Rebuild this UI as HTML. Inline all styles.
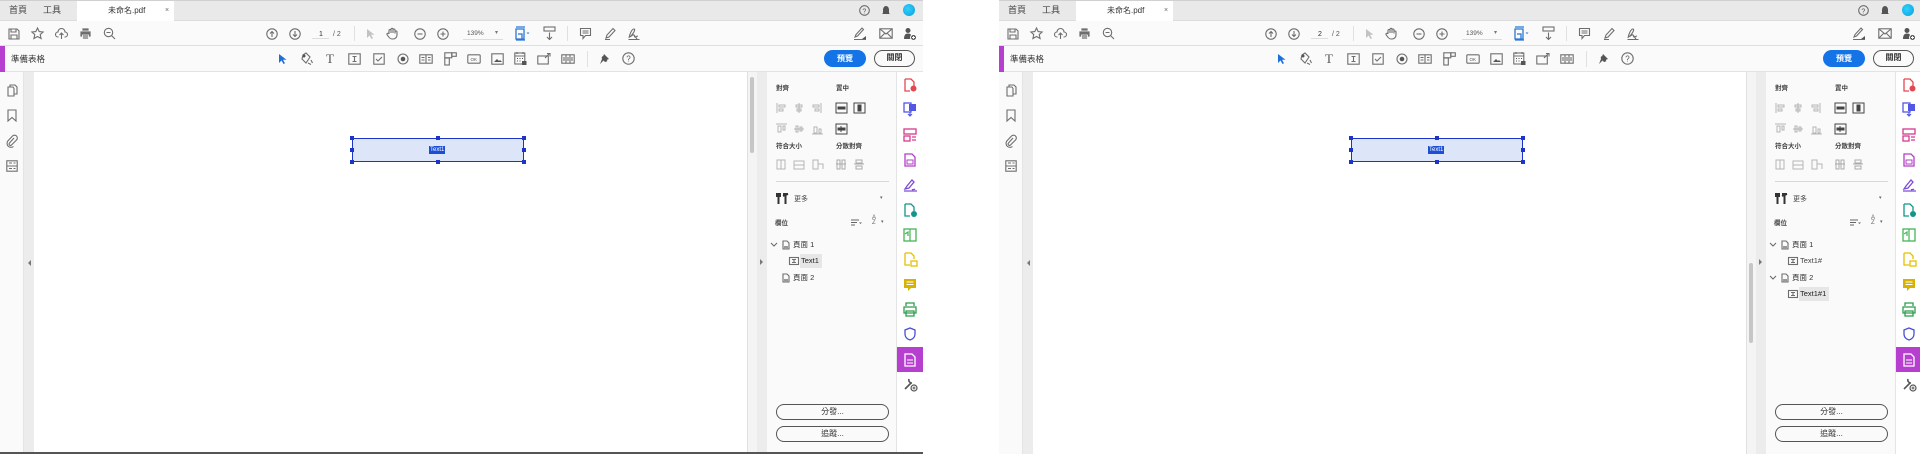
<!DOCTYPE html>
<html><head><meta charset="utf-8">
<style>
*{margin:0;padding:0;box-sizing:border-box}
body{width:1920px;height:454px;background:#fff;position:relative;overflow:hidden;font-family:"Liberation Sans","Noto Sans CJK TC",sans-serif;color:#2c2c2c}
.app{position:absolute;top:0;width:923px;height:454px;overflow:hidden;background:#fff}
.a{position:absolute}
.tabbar{left:0;top:0;width:923px;height:21px;background:#e9e9e9;border-top:1px solid #d0d0d0;border-bottom:1px solid #dcdcdc}
.tb{left:0;top:21px;width:923px;height:25px;background:#fafafa;border-bottom:1px solid #dedede}
.fb{left:0;top:46px;width:923px;height:26px;background:#fafafa;border-bottom:1px solid #e3e3e3}
.t{font-size:9px;white-space:nowrap;line-height:1}
svg{position:absolute;overflow:visible}
.ic{fill:none;stroke:#6e6e6e;stroke-width:1.1}
.btnb{border-radius:10px;font-size:8px;text-align:center;line-height:15px}
</style></head><body>

<!-- ================= LEFT APP ================= -->
<div class="app" style="left:0">
  <div class="a tabbar"></div>
  <div class="a" style="left:77px;top:1px;width:97px;height:20px;background:#fff"></div>
  <div class="a t" style="left:9px;top:6px;font-size:9px;color:#444">首頁</div>
  <div class="a t" style="left:43px;top:6px;font-size:9px;color:#444">工具</div>
  <div class="a t" style="left:108px;top:7px;font-size:8px;color:#333">未命名.pdf</div>
  <div class="a t" style="left:165px;top:7px;font-size:7px;color:#666">×</div>
  <svg style="left:859px;top:5px" width="11" height="11"><circle cx="5.5" cy="5.5" r="4.8" class="ic" stroke="#555"/><text x="3.4" y="8.3" font-size="7" fill="#555" font-family="Liberation Sans">?</text></svg>
  <svg style="left:881px;top:5px" width="10" height="11"><path d="M5 1C3 1 2 3 2 5v3L1 9h8L8 8V5C8 3 7 1 5 1zM4 10h2" fill="#555"/></svg>
  <div class="a" style="left:903px;top:4px;width:12px;height:12px;border-radius:50%;background:radial-gradient(circle at 40% 40%,#2fd0ff,#0a9fd8)"></div>

  <div class="a tb"></div>
  <!-- left tools -->
  <svg style="left:8px;top:28px" width="12" height="12"><path d="M1 1h8l2 2v8H1z M3 1v3h5V1 M3 11V7h6v4" class="ic"/></svg>
  <svg style="left:31px;top:27px" width="13" height="13"><path d="M6.5 1l1.7 3.6 3.9.4-2.9 2.6.9 3.9-3.6-2-3.6 2 .9-3.9L.9 5l3.9-.4z" class="ic"/></svg>
  <svg style="left:55px;top:27px" width="13" height="13"><path d="M3.5 10H3a2.5 2.5 0 0 1 0-5 3.5 3.5 0 0 1 7 0 2.5 2.5 0 0 1 0 5h-.5M6.5 12V6M4.5 8l2-2 2 2" class="ic"/></svg>
  <svg style="left:79px;top:27px" width="13" height="13"><path d="M3 4V1h7v3M1 4h11v6H1zM3.5 8h6v4h-6z" fill="#6e6e6e" stroke="#fafafa" stroke-width=".8"/></svg>
  <svg style="left:103px;top:27px" width="13" height="13"><circle cx="5.5" cy="5.5" r="4.2" class="ic"/><path d="M8.5 8.5L12 12M3.5 5.5h4" class="ic"/></svg>
  <!-- center tools -->
  <svg style="left:266px;top:28px" width="12" height="12"><circle cx="6" cy="6" r="5.2" class="ic" stroke="#c4c4c4"/><path d="M6 9V3.5M4 5.5l2-2 2 2" class="ic" stroke="#c4c4c4"/></svg>
  <svg style="left:289px;top:28px" width="12" height="12"><circle cx="6" cy="6" r="5.2" class="ic" stroke="#555"/><path d="M6 3v5.5M4 6.5l2 2 2-2" class="ic" stroke="#555"/></svg>
  <div class="a" style="left:312px;top:30px;width:17px;height:9px;border-bottom:1px solid #ddd"></div>
  <div class="a t" style="left:319px;top:31px;font-size:7px">1</div>
  <div class="a t" style="left:333px;top:31px;font-size:7px;color:#555">/ 2</div>
  <div class="a" style="left:354px;top:26px;width:1px;height:15px;background:#e0e0e0"></div>
  <svg style="left:366px;top:28px" width="10" height="12"><path d="M1 1v9l2.5-2.5 2 3.5 1.5-.8-2-3.4H8.5z" fill="#c2c2c2"/></svg>
  <svg style="left:386px;top:27px" width="12" height="13"><path d="M3 7V3.5a1 1 0 0 1 2 0V6M5 6V2.3a1 1 0 0 1 2 0V6M7 6V3a1 1 0 0 1 2 0v3.5M9 5a1 1 0 0 1 2 0v3c0 2.5-2 4-4 4H6c-2 0-3-1.5-4-3L1 7.5a1 1 0 0 1 2-.5" class="ic" stroke="#bbb"/></svg>
  <svg style="left:414px;top:28px" width="12" height="12"><circle cx="6" cy="6" r="5.2" class="ic" stroke="#555"/><path d="M3.5 6h5" class="ic" stroke="#555"/></svg>
  <svg style="left:437px;top:28px" width="12" height="12"><circle cx="6" cy="6" r="5.2" class="ic" stroke="#555"/><path d="M3.5 6h5M6 3.5v5" class="ic" stroke="#555"/></svg>
  <div class="a" style="left:463px;top:30px;width:40px;height:10px;border-bottom:1px solid #ddd"></div>
  <div class="a t" style="left:467px;top:31px;font-size:6.5px;color:#555">139%</div>
  <div class="a t" style="left:495px;top:30px;font-size:6px;color:#777">▾</div>
  <svg style="left:515px;top:26px" width="15" height="15"><path d="M1 1h9M1 14h9M1 3h8v10H1zM3 8h4v5" fill="none" stroke="#2b78d4" stroke-width="1.3"/><path d="M11.5 6.5h3l-1.5 1.6z" fill="#2b78d4"/></svg>
  <svg style="left:543px;top:26px" width="13" height="15"><rect x="1" y="1" width="11" height="4" class="ic" stroke="#555"/><path d="M6.5 6.5v7M4 11l2.5 2.5L9 11" class="ic" stroke="#555"/></svg>
  <div class="a" style="left:567px;top:26px;width:1px;height:15px;background:#e0e0e0"></div>
  <svg style="left:579px;top:27px" width="13" height="13"><path d="M1.5 1.5h10v7h-5l-2.5 3v-3h-2.5zM3.5 4h6M3.5 6h6" class="ic" stroke="#555"/></svg>
  <svg style="left:604px;top:27px" width="13" height="13"><path d="M2 11l1-3 6-6.5 2 2L5 10zM1 12.5h5" class="ic" stroke="#555"/></svg>
  <svg style="left:627px;top:27px" width="13" height="13"><path d="M2 11c1-5 3-9 5-9s-1 5-3 7 2-2 3-1 0 2 1 2 2-1 3-1M7 8l3 4M1.5 12.5h11" class="ic" stroke="#555"/></svg>
  <!-- right tools -->
  <svg style="left:853px;top:27px" width="14" height="13"><path d="M2 10l2.5-1 6-6.5-1.5-1.5L3 7.5z M1 12.5h12" class="ic" stroke="#555"/><path d="M9 12h4V9z" fill="#555"/></svg>
  <svg style="left:879px;top:28px" width="14" height="11"><rect x=".8" y=".8" width="12.4" height="9.4" class="ic" stroke="#555"/><path d="M1 1l6 5 6-5M1 10l4.5-4.5M13 10L8.5 5.5" class="ic" stroke="#555"/></svg>
  <svg style="left:903px;top:27px" width="14" height="14"><circle cx="5" cy="3.5" r="2.5" fill="#555"/><path d="M1 12c0-4 1.5-5.5 4-5.5s4 1.5 4 5.5z" fill="#555"/><circle cx="10.5" cy="10.5" r="3" fill="#555" stroke="#fafafa"/><path d="M9 10.5h3M10.5 9v3" stroke="#fff" stroke-width=".9"/></svg>

  <!-- form bar -->
  <div class="a fb"></div>
  <div class="a" style="left:0;top:46px;width:5px;height:26px;background:#b63fd0"></div>
  <div class="a t" style="left:11px;top:55px;font-size:8.5px;color:#333">準備表格</div>
  <svg style="left:278px;top:53px" width="9" height="12"><path d="M1 1v9l2.5-2.5 2 3.5 1.5-.8-2-3.4H8.5z" fill="#1e6fd6"/></svg>
  <svg style="left:300px;top:52px" width="14" height="14"><path d="M3 3l3-2 4 4-4 6-4-4zM8 11l3 1.5M11 8l1.5 3" class="ic" stroke="#555"/><circle cx="4" cy="4" r="1.5" fill="#555"/></svg>
  <div class="a t" style="left:326px;top:52px;font-size:13px;font-family:'Liberation Serif',serif;color:#555">T</div>
  <svg style="left:348px;top:53px" width="13" height="12"><rect x=".8" y=".8" width="11.4" height="10.4" class="ic" stroke="#555"/><path d="M4.5 3.5h4M6.5 3.5v5M4.5 8.5h4" class="ic" stroke="#555"/></svg>
  <svg style="left:373px;top:53px" width="12" height="12"><rect x=".8" y=".8" width="10.4" height="10.4" class="ic" stroke="#555"/><path d="M3 6l2 2 4-4" class="ic" stroke="#555"/></svg>
  <svg style="left:397px;top:53px" width="12" height="12"><circle cx="6" cy="6" r="5" class="ic" stroke="#555"/><circle cx="6" cy="6" r="2.3" fill="#555"/></svg>
  <svg style="left:419px;top:54px" width="14" height="10"><rect x=".8" y=".8" width="12.4" height="8.4" class="ic" stroke="#555"/><path d="M7 1v8M2.5 3.5h3M2.5 6h3M9 3.5h2.5M9 6h2.5" class="ic" stroke="#555"/></svg>
  <svg style="left:444px;top:52px" width="13" height="14"><rect x=".8" y=".8" width="7" height="5" class="ic" stroke="#555"/><rect x="7.8" y=".8" width="4.5" height="3.5" class="ic" stroke="#555"/><rect x=".8" y="6" width="4.5" height="7" class="ic" stroke="#555"/></svg>
  <svg style="left:467px;top:54px" width="14" height="10"><rect x=".8" y=".8" width="12.4" height="8.4" rx="1" class="ic" stroke="#555"/><text x="3.5" y="7" font-size="4.5" fill="#555" font-family="Liberation Sans">OK</text></svg>
  <svg style="left:491px;top:53px" width="13" height="12"><rect x=".8" y=".8" width="11.4" height="10.4" class="ic" stroke="#555"/><path d="M3 9l3-3 2 2 1-1 2 2z" fill="#555"/></svg>
  <svg style="left:514px;top:51px" width="13" height="15"><rect x=".8" y="2" width="10" height="11" class="ic" stroke="#555"/><path d="M3 1v2M9 1v2M1 5h10" class="ic" stroke="#555"/><path d="M3 7h1v1H3zM5.5 7h1v1h-1zM8 7h1v1H8zM3 9.5h1v1H3zM5.5 9.5h1v1h-1z" fill="#555"/><rect x="8" y="10" width="4.5" height="4" fill="#555"/></svg>
  <svg style="left:537px;top:52px" width="15" height="13"><rect x=".8" y="4" width="10.5" height="8" class="ic" stroke="#555"/><path d="M8 6l4-4M10 1.5h3v3" class="ic" stroke="#555"/></svg>
  <svg style="left:561px;top:54px" width="14" height="10"><rect x=".8" y=".8" width="12.4" height="8.4" class="ic" stroke="#555"/><path d="M5 1v8M9 1v8M3 3v4M7 3v4M11 3v4" class="ic" stroke="#555"/></svg>
  <div class="a" style="left:587px;top:51px;width:1px;height:16px;background:#e0e0e0"></div>
  <svg style="left:598px;top:52px" width="13" height="13"><path d="M6 2l5 5-1.5.5L7 10 5.5 8.5 2 12M3.5 6l1-2 5 5-2 1" fill="#555"/></svg>
  <svg style="left:622px;top:52px" width="13" height="13"><circle cx="6.5" cy="6.5" r="5.7" class="ic" stroke="#555"/><text x="4.2" y="9.3" font-size="8" fill="#555" font-family="Liberation Sans">?</text></svg>
  <div class="a btnb" style="left:824px;top:50px;width:42px;height:17px;background:#1473e6;color:#fff;font-weight:bold;line-height:17px;border-radius:9px">預覽</div>
  <div class="a btnb" style="left:874px;top:50px;width:41px;height:17px;border:1.5px solid #555;color:#333;font-weight:bold;line-height:14px;border-radius:9px">關閉</div>

  <!-- content -->
  <div class="a" style="left:0;top:72px;width:24px;height:382px;background:#fafafa;border-right:1px solid #e4e4e4"></div>
  <div class="a" style="left:24px;top:72px;width:10px;height:382px;background:#ececec"></div>
  <svg style="left:7px;top:84px" width="11" height="13"><path d="M3 3V1h5l2 2v7H7M1 3h5l1 1.5V12H1z" class="ic" stroke="#555"/></svg>
  <svg style="left:7px;top:109px" width="10" height="13"><path d="M1 1h8v11L5 8.5 1 12z" class="ic" stroke="#555"/></svg>
  <svg style="left:6px;top:134px" width="12" height="13"><path d="M8 4L3.5 9a1.4 1.4 0 0 0 2 2L10.5 6a2.8 2.8 0 0 0-4-4L1.8 7A4 4 0 0 0 7.5 12.5" class="ic" stroke="#555"/></svg>
  <svg style="left:6px;top:160px" width="12" height="12"><rect x=".8" y=".8" width="10.4" height="10.4" class="ic" stroke="#555"/><path d="M1 6h10M3 3h3M3 8.5h3M7.5 3h2M7.5 8.5h2" class="ic" stroke="#555"/></svg>
  <div class="a" style="left:28px;top:260px;width:0;height:0;border:3px solid transparent;border-right:3px solid #777;border-left:0"></div>

  <!-- text field -->
  <div class="a" style="left:352px;top:138px;width:172px;height:24px;background:#dde5f9;border:1.5px solid #1d34c9"></div>
  <div class="a" style="left:350px;top:136px;width:4px;height:4px;background:#1d34c9"></div>
  <div class="a" style="left:436px;top:136px;width:4px;height:4px;background:#1d34c9"></div>
  <div class="a" style="left:522px;top:136px;width:4px;height:4px;background:#1d34c9"></div>
  <div class="a" style="left:350px;top:148px;width:4px;height:4px;background:#1d34c9"></div>
  <div class="a" style="left:522px;top:148px;width:4px;height:4px;background:#1d34c9"></div>
  <div class="a" style="left:350px;top:160px;width:4px;height:4px;background:#1d34c9"></div>
  <div class="a" style="left:436px;top:160px;width:4px;height:4px;background:#1d34c9"></div>
  <div class="a" style="left:522px;top:160px;width:4px;height:4px;background:#1d34c9"></div>
  <div class="a t" style="left:429px;top:146px;font-size:6px;background:#1d4fd6;color:#fff;padding:1px 1px">Text1</div>

  <!-- scrollbar -->
  <div class="a" style="left:747px;top:72px;width:10px;height:382px;background:#f4f4f4;border-left:1px solid #e0e0e0"></div>
  <div class="a" style="left:750px;top:77px;width:4px;height:76px;background:#c6c6c6;border-radius:2px"></div>
  <div class="a" style="left:757px;top:72px;width:10px;height:382px;background:#ececec"></div>
  <div class="a" style="left:760px;top:259px;width:0;height:0;border:3px solid transparent;border-left:3px solid #777;border-right:0"></div>

  <!-- right panel -->
  <div class="a" style="left:767px;top:72px;width:130px;height:382px;background:#fafafa;border-right:1px solid #e4e4e4"></div>
  <div class="a t" style="left:776px;top:86px;font-size:6.5px;font-weight:bold;color:#444">對齊</div>
  <div class="a t" style="left:836px;top:86px;font-size:6.5px;font-weight:bold;color:#444">置中</div>
  <svg style="left:776px;top:102px" width="120" height="70" stroke="#b5b5b5" fill="none" stroke-width="1">
    <path d="M1 1v10M3 3h6v2H3zM3 7h4v2H3z"/>
    <path d="M23 1v10M20 3h6v2h-6zM21 7h4v2h-4z"/>
    <path d="M45 1v10M37 3h6v2h-6zM39 7h4v2h-4z"/>
    <g stroke="#444"><rect x="60" y="1" width="11" height="10"/><path d="M62 5h7v2h-7z" fill="#444"/><rect x="78" y="1" width="11" height="10"/><path d="M82 3h3v6h-3z" fill="#444"/></g>
    <path d="M0 22h11M2 24h3v6H2zM7 24h2v4H7z"/>
    <path d="M18 27h10M20 24h2v6h-2zM24 25h2v4h-2z"/>
    <path d="M36 32h11M38 25h3v6h-3zM43 27h2v4h-2z"/>
    <g stroke="#444"><rect x="60" y="22" width="11" height="10"/><path d="M65 24v6M62 26h7v2h-7z" fill="#444"/></g>
    <path d="M1 58h8v9H1zM5 58v9M3 60h0"/>
    <path d="M18 59h10v8H18zM18 63h10"/>
    <path d="M37 58h5v9h-5zM42 62h5v5"/>
    <path d="M60 62h10M61 58h3v9h-3zM66 58h3v9h-3z" stroke="#aaa"/>
    <path d="M78 62h10M80 58h6v3h-6zM80 64h6v3h-6z" stroke="#aaa"/>
  </svg>
  <div class="a t" style="left:776px;top:144px;font-size:6.5px;font-weight:bold;color:#444">符合大小</div>
  <div class="a t" style="left:836px;top:144px;font-size:6.5px;font-weight:bold;color:#444">分散對齊</div>
  <div class="a" style="left:776px;top:181px;width:113px;height:1px;background:#d8d8d8"></div>
  <svg style="left:775px;top:192px" width="14" height="13"><path d="M1 2h5M3.5 2v10M8 2h5M10.5 2v10M1 4h5M8 4l5-2" stroke="#333" stroke-width="2"/></svg>
  <div class="a t" style="left:794px;top:196px;font-size:7px;color:#444">更多</div>
  <div class="a t" style="left:880px;top:196px;font-size:5px;color:#666">▾</div>
  <div class="a t" style="left:775px;top:221px;font-size:6.5px;font-weight:bold;color:#444">欄位</div>
  <svg style="left:850px;top:219px" width="12" height="8"><path d="M1 1h8M1 3.5h6M1 6h4" stroke="#666"/><path d="M9 3.5h3l-1.5 1.5z" fill="#666"/></svg>
  <div class="a t" style="left:872px;top:216px;font-size:6px;color:#666;line-height:.8">A<br>Z</div>
  <div class="a t" style="left:881px;top:220px;font-size:5px;color:#666">▾</div>
  <!-- tree -->
  <svg style="left:770px;top:242px" width="8" height="6"><path d="M1 1l3 3 3-3" stroke="#666" fill="none"/></svg>
  <svg style="left:782px;top:240px" width="8" height="10"><path d="M1 1h4l2 2v6H1z" class="ic" stroke="#777"/><path d="M2 6h4v3H2z" fill="#999"/></svg>
  <div class="a t" style="left:793px;top:241px;font-size:7.5px;color:#333">頁面 1</div>
  <div class="a" style="left:800px;top:254px;width:22px;height:14px;background:#e6e6e6"></div>
  <svg style="left:789px;top:257px" width="10" height="8"><rect x=".5" y=".5" width="9" height="7" class="ic" stroke="#777" stroke-width=".9"/><path d="M3 2.5h4M5 2.5v3M3 5.5h4" class="ic" stroke="#777" stroke-width=".8"/></svg>
  <div class="a t" style="left:801px;top:257px;font-size:7.5px;color:#222">Text1</div>
  <svg style="left:782px;top:273px" width="8" height="10"><path d="M1 1h4l2 2v6H1z" class="ic" stroke="#777"/><path d="M2 6h4v3H2z" fill="#999"/></svg>
  <div class="a t" style="left:793px;top:274px;font-size:7.5px;color:#333">頁面 2</div>
  <div class="a btnb" style="left:776px;top:404px;width:113px;height:16px;border:1px solid #555;line-height:14px;color:#333">分發...</div>
  <div class="a btnb" style="left:776px;top:426px;width:113px;height:16px;border:1px solid #555;line-height:14px;color:#333">追蹤...</div>

  <!-- right icon column -->
  <div class="a" style="left:897px;top:72px;width:26px;height:382px;background:#fff"></div>
  <svg style="left:903px;top:78px" width="14" height="14"><path d="M2 1h6l3 3v4M2 1v12h5" fill="none" stroke="#e34850" stroke-width="1.3"/><circle cx="10.5" cy="10.5" r="3" fill="#e34850"/></svg>
  <svg style="left:903px;top:102px" width="14" height="15"><rect x="1" y="1" width="7" height="9" fill="#fff" stroke="#5258e4" stroke-width="1.3"/><rect x="6" y="2" width="7" height="7" fill="#5258e4"/><path d="M7 10v4M5 12l2 2 2-2" stroke="#5258e4" fill="none" stroke-width="1.2"/></svg>
  <svg style="left:903px;top:128px" width="14" height="14"><rect x="1" y="1" width="12" height="5" fill="none" stroke="#d83790" stroke-width="1.3"/><rect x="1" y="8" width="6" height="5" fill="none" stroke="#d83790" stroke-width="1.3"/><path d="M9 9h4M9 12h4" stroke="#d83790" stroke-width="1.3"/></svg>
  <svg style="left:904px;top:153px" width="12" height="14"><path d="M1 1h7l3 3v9H1z" fill="none" stroke="#b33ec8" stroke-width="1.3"/><rect x="3" y="7" width="6" height="4" fill="none" stroke="#b33ec8"/></svg>
  <svg style="left:903px;top:178px" width="15" height="14"><path d="M2 11l2-3 5-6 2 2-5 6zM1 13h13M9 12c1-1 2 0 3-1" fill="none" stroke="#7e4cd8" stroke-width="1.3"/></svg>
  <svg style="left:903px;top:203px" width="15" height="14"><path d="M2 1h6l3 3v4M2 1v12h5" fill="none" stroke="#12968a" stroke-width="1.3"/><circle cx="11" cy="11" r="3" fill="#12968a"/></svg>
  <svg style="left:903px;top:228px" width="14" height="14"><rect x="1" y="1" width="12" height="12" fill="none" stroke="#44b556" stroke-width="1.3"/><path d="M7 1v12M2 6l3-2v4" fill="none" stroke="#44b556" stroke-width="1.2"/></svg>
  <svg style="left:903px;top:252px" width="15" height="15"><path d="M2 1h6l3 3v3M2 1v12h5" fill="none" stroke="#e3c100" stroke-width="1.3"/><rect x="8" y="9" width="6" height="5" fill="none" stroke="#e3c100" stroke-width="1.3"/></svg>
  <svg style="left:903px;top:278px" width="14" height="14"><path d="M1 1h12v9H8l-3 3v-3H1z" fill="#d8b200"/><path d="M3.5 4h7M3.5 6.5h7" stroke="#fff"/></svg>
  <svg style="left:903px;top:302px" width="14" height="15"><path d="M3 4V1h8v3M1 5h12v6H1zM3 9h8v5H3z" fill="none" stroke="#2d9d4e" stroke-width="1.3"/></svg>
  <svg style="left:904px;top:327px" width="12" height="14"><path d="M6 1l5 2v4c0 3-2 5-5 6-3-1-5-3-5-6V3z" fill="none" stroke="#4b4fd4" stroke-width="1.3"/></svg>
  <div class="a" style="left:897px;top:347px;width:26px;height:25px;background:#b63fd0"></div>
  <svg style="left:904px;top:353px" width="12" height="14"><path d="M1 1h7l3 3v9H1z" fill="none" stroke="#fff" stroke-width="1.3"/><path d="M3 7h6M3 10h6" stroke="#fff"/></svg>
  <svg style="left:903px;top:377px" width="15" height="15"><path d="M2 12l6-6M6 2a3 3 0 0 0 3 4" fill="none" stroke="#555" stroke-width="1.6"/><circle cx="11" cy="11" r="3" fill="none" stroke="#555" stroke-width="1.2"/><path d="M9.5 11h3M11 9.5v3" stroke="#555"/></svg>
  <div class="a" style="left:0;top:452px;width:923px;height:2px;background:#555"></div>
</div>

<!-- ================= RIGHT APP ================= -->
<div class="app" style="left:999px">
  <div class="a tabbar"></div>
  <div class="a" style="left:77px;top:1px;width:97px;height:20px;background:#fff"></div>
  <div class="a t" style="left:9px;top:6px;font-size:9px;color:#444">首頁</div>
  <div class="a t" style="left:43px;top:6px;font-size:9px;color:#444">工具</div>
  <div class="a t" style="left:108px;top:7px;font-size:8px;color:#333">未命名.pdf</div>
  <div class="a t" style="left:165px;top:7px;font-size:7px;color:#666">×</div>
  <svg style="left:859px;top:5px" width="11" height="11"><circle cx="5.5" cy="5.5" r="4.8" class="ic" stroke="#555"/><text x="3.4" y="8.3" font-size="7" fill="#555" font-family="Liberation Sans">?</text></svg>
  <svg style="left:881px;top:5px" width="10" height="11"><path d="M5 1C3 1 2 3 2 5v3L1 9h8L8 8V5C8 3 7 1 5 1zM4 10h2" fill="#555"/></svg>
  <div class="a" style="left:903px;top:4px;width:12px;height:12px;border-radius:50%;background:radial-gradient(circle at 40% 40%,#2fd0ff,#0a9fd8)"></div>

  <div class="a tb"></div>
  <svg style="left:8px;top:28px" width="12" height="12"><path d="M1 1h8l2 2v8H1z M3 1v3h5V1 M3 11V7h6v4" class="ic"/></svg>
  <svg style="left:31px;top:27px" width="13" height="13"><path d="M6.5 1l1.7 3.6 3.9.4-2.9 2.6.9 3.9-3.6-2-3.6 2 .9-3.9L.9 5l3.9-.4z" class="ic"/></svg>
  <svg style="left:55px;top:27px" width="13" height="13"><path d="M3.5 10H3a2.5 2.5 0 0 1 0-5 3.5 3.5 0 0 1 7 0 2.5 2.5 0 0 1 0 5h-.5M6.5 12V6M4.5 8l2-2 2 2" class="ic"/></svg>
  <svg style="left:79px;top:27px" width="13" height="13"><path d="M3 4V1h7v3M1 4h11v6H1zM3.5 8h6v4h-6z" fill="#6e6e6e" stroke="#fafafa" stroke-width=".8"/></svg>
  <svg style="left:103px;top:27px" width="13" height="13"><circle cx="5.5" cy="5.5" r="4.2" class="ic"/><path d="M8.5 8.5L12 12M3.5 5.5h4" class="ic"/></svg>
  <svg style="left:266px;top:28px" width="12" height="12"><circle cx="6" cy="6" r="5.2" class="ic" stroke="#555"/><path d="M6 9V3.5M4 5.5l2-2 2 2" class="ic" stroke="#555"/></svg>
  <svg style="left:289px;top:28px" width="12" height="12"><circle cx="6" cy="6" r="5.2" class="ic" stroke="#c4c4c4"/><path d="M6 3v5.5M4 6.5l2 2 2-2" class="ic" stroke="#c4c4c4"/></svg>
  <div class="a" style="left:312px;top:30px;width:17px;height:9px;border-bottom:1px solid #ddd"></div>
  <div class="a t" style="left:319px;top:31px;font-size:7px">2</div>
  <div class="a t" style="left:333px;top:31px;font-size:7px;color:#555">/ 2</div>
  <div class="a" style="left:354px;top:26px;width:1px;height:15px;background:#e0e0e0"></div>
  <svg style="left:366px;top:28px" width="10" height="12"><path d="M1 1v9l2.5-2.5 2 3.5 1.5-.8-2-3.4H8.5z" fill="#c2c2c2"/></svg>
  <svg style="left:386px;top:27px" width="12" height="13"><path d="M3 7V3.5a1 1 0 0 1 2 0V6M5 6V2.3a1 1 0 0 1 2 0V6M7 6V3a1 1 0 0 1 2 0v3.5M9 5a1 1 0 0 1 2 0v3c0 2.5-2 4-4 4H6c-2 0-3-1.5-4-3L1 7.5a1 1 0 0 1 2-.5" class="ic" stroke="#bbb"/></svg>
  <svg style="left:414px;top:28px" width="12" height="12"><circle cx="6" cy="6" r="5.2" class="ic" stroke="#555"/><path d="M3.5 6h5" class="ic" stroke="#555"/></svg>
  <svg style="left:437px;top:28px" width="12" height="12"><circle cx="6" cy="6" r="5.2" class="ic" stroke="#555"/><path d="M3.5 6h5M6 3.5v5" class="ic" stroke="#555"/></svg>
  <div class="a" style="left:463px;top:30px;width:40px;height:10px;border-bottom:1px solid #ddd"></div>
  <div class="a t" style="left:467px;top:31px;font-size:6.5px;color:#555">139%</div>
  <div class="a t" style="left:495px;top:30px;font-size:6px;color:#777">▾</div>
  <svg style="left:515px;top:26px" width="15" height="15"><path d="M1 1h9M1 14h9M1 3h8v10H1zM3 8h4v5" fill="none" stroke="#2b78d4" stroke-width="1.3"/><path d="M11.5 6.5h3l-1.5 1.6z" fill="#2b78d4"/></svg>
  <svg style="left:543px;top:26px" width="13" height="15"><rect x="1" y="1" width="11" height="4" class="ic" stroke="#555"/><path d="M6.5 6.5v7M4 11l2.5 2.5L9 11" class="ic" stroke="#555"/></svg>
  <div class="a" style="left:567px;top:26px;width:1px;height:15px;background:#e0e0e0"></div>
  <svg style="left:579px;top:27px" width="13" height="13"><path d="M1.5 1.5h10v7h-5l-2.5 3v-3h-2.5zM3.5 4h6M3.5 6h6" class="ic" stroke="#555"/></svg>
  <svg style="left:604px;top:27px" width="13" height="13"><path d="M2 11l1-3 6-6.5 2 2L5 10zM1 12.5h5" class="ic" stroke="#555"/></svg>
  <svg style="left:627px;top:27px" width="13" height="13"><path d="M2 11c1-5 3-9 5-9s-1 5-3 7 2-2 3-1 0 2 1 2 2-1 3-1M7 8l3 4M1.5 12.5h11" class="ic" stroke="#555"/></svg>
  <svg style="left:853px;top:27px" width="14" height="13"><path d="M2 10l2.5-1 6-6.5-1.5-1.5L3 7.5z M1 12.5h12" class="ic" stroke="#555"/><path d="M9 12h4V9z" fill="#555"/></svg>
  <svg style="left:879px;top:28px" width="14" height="11"><rect x=".8" y=".8" width="12.4" height="9.4" class="ic" stroke="#555"/><path d="M1 1l6 5 6-5M1 10l4.5-4.5M13 10L8.5 5.5" class="ic" stroke="#555"/></svg>
  <svg style="left:903px;top:27px" width="14" height="14"><circle cx="5" cy="3.5" r="2.5" fill="#555"/><path d="M1 12c0-4 1.5-5.5 4-5.5s4 1.5 4 5.5z" fill="#555"/><circle cx="10.5" cy="10.5" r="3" fill="#555" stroke="#fafafa"/><path d="M9 10.5h3M10.5 9v3" stroke="#fff" stroke-width=".9"/></svg>

  <div class="a fb"></div>
  <div class="a" style="left:0;top:46px;width:5px;height:26px;background:#b63fd0"></div>
  <div class="a t" style="left:11px;top:55px;font-size:8.5px;color:#333">準備表格</div>
  <svg style="left:278px;top:53px" width="9" height="12"><path d="M1 1v9l2.5-2.5 2 3.5 1.5-.8-2-3.4H8.5z" fill="#1e6fd6"/></svg>
  <svg style="left:300px;top:52px" width="14" height="14"><path d="M3 3l3-2 4 4-4 6-4-4zM8 11l3 1.5M11 8l1.5 3" class="ic" stroke="#555"/><circle cx="4" cy="4" r="1.5" fill="#555"/></svg>
  <div class="a t" style="left:326px;top:52px;font-size:13px;font-family:'Liberation Serif',serif;color:#555">T</div>
  <svg style="left:348px;top:53px" width="13" height="12"><rect x=".8" y=".8" width="11.4" height="10.4" class="ic" stroke="#555"/><path d="M4.5 3.5h4M6.5 3.5v5M4.5 8.5h4" class="ic" stroke="#555"/></svg>
  <svg style="left:373px;top:53px" width="12" height="12"><rect x=".8" y=".8" width="10.4" height="10.4" class="ic" stroke="#555"/><path d="M3 6l2 2 4-4" class="ic" stroke="#555"/></svg>
  <svg style="left:397px;top:53px" width="12" height="12"><circle cx="6" cy="6" r="5" class="ic" stroke="#555"/><circle cx="6" cy="6" r="2.3" fill="#555"/></svg>
  <svg style="left:419px;top:54px" width="14" height="10"><rect x=".8" y=".8" width="12.4" height="8.4" class="ic" stroke="#555"/><path d="M7 1v8M2.5 3.5h3M2.5 6h3M9 3.5h2.5M9 6h2.5" class="ic" stroke="#555"/></svg>
  <svg style="left:444px;top:52px" width="13" height="14"><rect x=".8" y=".8" width="7" height="5" class="ic" stroke="#555"/><rect x="7.8" y=".8" width="4.5" height="3.5" class="ic" stroke="#555"/><rect x=".8" y="6" width="4.5" height="7" class="ic" stroke="#555"/></svg>
  <svg style="left:467px;top:54px" width="14" height="10"><rect x=".8" y=".8" width="12.4" height="8.4" rx="1" class="ic" stroke="#555"/><text x="3.5" y="7" font-size="4.5" fill="#555" font-family="Liberation Sans">OK</text></svg>
  <svg style="left:491px;top:53px" width="13" height="12"><rect x=".8" y=".8" width="11.4" height="10.4" class="ic" stroke="#555"/><path d="M3 9l3-3 2 2 1-1 2 2z" fill="#555"/></svg>
  <svg style="left:514px;top:51px" width="13" height="15"><rect x=".8" y="2" width="10" height="11" class="ic" stroke="#555"/><path d="M3 1v2M9 1v2M1 5h10" class="ic" stroke="#555"/><path d="M3 7h1v1H3zM5.5 7h1v1h-1zM8 7h1v1H8zM3 9.5h1v1H3zM5.5 9.5h1v1h-1z" fill="#555"/><rect x="8" y="10" width="4.5" height="4" fill="#555"/></svg>
  <svg style="left:537px;top:52px" width="15" height="13"><rect x=".8" y="4" width="10.5" height="8" class="ic" stroke="#555"/><path d="M8 6l4-4M10 1.5h3v3" class="ic" stroke="#555"/></svg>
  <svg style="left:561px;top:54px" width="14" height="10"><rect x=".8" y=".8" width="12.4" height="8.4" class="ic" stroke="#555"/><path d="M5 1v8M9 1v8M3 3v4M7 3v4M11 3v4" class="ic" stroke="#555"/></svg>
  <div class="a" style="left:587px;top:51px;width:1px;height:16px;background:#e0e0e0"></div>
  <svg style="left:598px;top:52px" width="13" height="13"><path d="M6 2l5 5-1.5.5L7 10 5.5 8.5 2 12M3.5 6l1-2 5 5-2 1" fill="#555"/></svg>
  <svg style="left:622px;top:52px" width="13" height="13"><circle cx="6.5" cy="6.5" r="5.7" class="ic" stroke="#555"/><text x="4.2" y="9.3" font-size="8" fill="#555" font-family="Liberation Sans">?</text></svg>
  <div class="a btnb" style="left:824px;top:50px;width:42px;height:17px;background:#1473e6;color:#fff;font-weight:bold;line-height:17px;border-radius:9px">預覽</div>
  <div class="a btnb" style="left:874px;top:50px;width:41px;height:17px;border:1.5px solid #555;color:#333;font-weight:bold;line-height:14px;border-radius:9px">關閉</div>

  <div class="a" style="left:0;top:72px;width:24px;height:382px;background:#fafafa;border-right:1px solid #e4e4e4"></div>
  <div class="a" style="left:24px;top:72px;width:10px;height:382px;background:#ececec"></div>
  <svg style="left:7px;top:84px" width="11" height="13"><path d="M3 3V1h5l2 2v7H7M1 3h5l1 1.5V12H1z" class="ic" stroke="#555"/></svg>
  <svg style="left:7px;top:109px" width="10" height="13"><path d="M1 1h8v11L5 8.5 1 12z" class="ic" stroke="#555"/></svg>
  <svg style="left:6px;top:134px" width="12" height="13"><path d="M8 4L3.5 9a1.4 1.4 0 0 0 2 2L10.5 6a2.8 2.8 0 0 0-4-4L1.8 7A4 4 0 0 0 7.5 12.5" class="ic" stroke="#555"/></svg>
  <svg style="left:6px;top:160px" width="12" height="12"><rect x=".8" y=".8" width="10.4" height="10.4" class="ic" stroke="#555"/><path d="M1 6h10M3 3h3M3 8.5h3M7.5 3h2M7.5 8.5h2" class="ic" stroke="#555"/></svg>
  <div class="a" style="left:28px;top:260px;width:0;height:0;border:3px solid transparent;border-right:3px solid #777;border-left:0"></div>

  <div class="a" style="left:352px;top:138px;width:172px;height:24px;background:#dde5f9;border:1.5px solid #1d34c9"></div>
  <div class="a" style="left:350px;top:136px;width:4px;height:4px;background:#1d34c9"></div>
  <div class="a" style="left:436px;top:136px;width:4px;height:4px;background:#1d34c9"></div>
  <div class="a" style="left:522px;top:136px;width:4px;height:4px;background:#1d34c9"></div>
  <div class="a" style="left:350px;top:148px;width:4px;height:4px;background:#1d34c9"></div>
  <div class="a" style="left:522px;top:148px;width:4px;height:4px;background:#1d34c9"></div>
  <div class="a" style="left:350px;top:160px;width:4px;height:4px;background:#1d34c9"></div>
  <div class="a" style="left:436px;top:160px;width:4px;height:4px;background:#1d34c9"></div>
  <div class="a" style="left:522px;top:160px;width:4px;height:4px;background:#1d34c9"></div>
  <div class="a t" style="left:429px;top:146px;font-size:6px;background:#1d4fd6;color:#fff;padding:1px 1px">Text1</div>

  <div class="a" style="left:747px;top:72px;width:10px;height:382px;background:#f4f4f4;border-left:1px solid #e0e0e0"></div>
  <div class="a" style="left:750px;top:263px;width:4px;height:80px;background:#c6c6c6;border-radius:2px"></div>
  <div class="a" style="left:757px;top:72px;width:10px;height:382px;background:#ececec"></div>
  <div class="a" style="left:760px;top:259px;width:0;height:0;border:3px solid transparent;border-left:3px solid #777;border-right:0"></div>

  <div class="a" style="left:767px;top:72px;width:130px;height:382px;background:#fafafa;border-right:1px solid #e4e4e4"></div>
  <div class="a t" style="left:776px;top:86px;font-size:6.5px;font-weight:bold;color:#444">對齊</div>
  <div class="a t" style="left:836px;top:86px;font-size:6.5px;font-weight:bold;color:#444">置中</div>
  <svg style="left:776px;top:102px" width="120" height="70" stroke="#b5b5b5" fill="none" stroke-width="1">
    <path d="M1 1v10M3 3h6v2H3zM3 7h4v2H3z"/>
    <path d="M23 1v10M20 3h6v2h-6zM21 7h4v2h-4z"/>
    <path d="M45 1v10M37 3h6v2h-6zM39 7h4v2h-4z"/>
    <g stroke="#444"><rect x="60" y="1" width="11" height="10"/><path d="M62 5h7v2h-7z" fill="#444"/><rect x="78" y="1" width="11" height="10"/><path d="M82 3h3v6h-3z" fill="#444"/></g>
    <path d="M0 22h11M2 24h3v6H2zM7 24h2v4H7z"/>
    <path d="M18 27h10M20 24h2v6h-2zM24 25h2v4h-2z"/>
    <path d="M36 32h11M38 25h3v6h-3zM43 27h2v4h-2z"/>
    <g stroke="#444"><rect x="60" y="22" width="11" height="10"/><path d="M65 24v6M62 26h7v2h-7z" fill="#444"/></g>
    <path d="M1 58h8v9H1zM5 58v9"/>
    <path d="M18 59h10v8H18zM18 63h10"/>
    <path d="M37 58h5v9h-5zM42 62h5v5"/>
    <path d="M60 62h10M61 58h3v9h-3zM66 58h3v9h-3z" stroke="#aaa"/>
    <path d="M78 62h10M80 58h6v3h-6zM80 64h6v3h-6z" stroke="#aaa"/>
  </svg>
  <div class="a t" style="left:776px;top:144px;font-size:6.5px;font-weight:bold;color:#444">符合大小</div>
  <div class="a t" style="left:836px;top:144px;font-size:6.5px;font-weight:bold;color:#444">分散對齊</div>
  <div class="a" style="left:776px;top:181px;width:113px;height:1px;background:#d8d8d8"></div>
  <svg style="left:775px;top:192px" width="14" height="13"><path d="M1 2h5M3.5 2v10M8 2h5M10.5 2v10M1 4h5M8 4l5-2" stroke="#333" stroke-width="2"/></svg>
  <div class="a t" style="left:794px;top:196px;font-size:7px;color:#444">更多</div>
  <div class="a t" style="left:880px;top:196px;font-size:5px;color:#666">▾</div>
  <div class="a t" style="left:775px;top:221px;font-size:6.5px;font-weight:bold;color:#444">欄位</div>
  <svg style="left:850px;top:219px" width="12" height="8"><path d="M1 1h8M1 3.5h6M1 6h4" stroke="#666"/><path d="M9 3.5h3l-1.5 1.5z" fill="#666"/></svg>
  <div class="a t" style="left:872px;top:216px;font-size:6px;color:#666;line-height:.8">A<br>Z</div>
  <div class="a t" style="left:881px;top:220px;font-size:5px;color:#666">▾</div>
  <svg style="left:770px;top:242px" width="8" height="6"><path d="M1 1l3 3 3-3" stroke="#666" fill="none"/></svg>
  <svg style="left:782px;top:240px" width="8" height="10"><path d="M1 1h4l2 2v6H1z" class="ic" stroke="#777"/><path d="M2 6h4v3H2z" fill="#999"/></svg>
  <div class="a t" style="left:793px;top:241px;font-size:7.5px;color:#333">頁面 1</div>
  <svg style="left:789px;top:257px" width="10" height="8"><rect x=".5" y=".5" width="9" height="7" class="ic" stroke="#777" stroke-width=".9"/><path d="M3 2.5h4M5 2.5v3M3 5.5h4" class="ic" stroke="#777" stroke-width=".8"/></svg>
  <div class="a t" style="left:801px;top:257px;font-size:7.5px;color:#444">Text1#</div>
  <svg style="left:770px;top:275px" width="8" height="6"><path d="M1 1l3 3 3-3" stroke="#666" fill="none"/></svg>
  <svg style="left:782px;top:273px" width="8" height="10"><path d="M1 1h4l2 2v6H1z" class="ic" stroke="#777"/><path d="M2 6h4v3H2z" fill="#999"/></svg>
  <div class="a t" style="left:793px;top:274px;font-size:7.5px;color:#333">頁面 2</div>
  <div class="a" style="left:800px;top:287px;width:30px;height:14px;background:#e6e6e6"></div>
  <svg style="left:789px;top:290px" width="10" height="8"><rect x=".5" y=".5" width="9" height="7" class="ic" stroke="#777" stroke-width=".9"/><path d="M3 2.5h4M5 2.5v3M3 5.5h4" class="ic" stroke="#777" stroke-width=".8"/></svg>
  <div class="a t" style="left:801px;top:290px;font-size:7.5px;color:#222">Text1#1</div>
  <div class="a btnb" style="left:776px;top:404px;width:113px;height:16px;border:1px solid #555;line-height:14px;color:#333">分發...</div>
  <div class="a btnb" style="left:776px;top:426px;width:113px;height:16px;border:1px solid #555;line-height:14px;color:#333">追蹤...</div>

  <div class="a" style="left:897px;top:72px;width:26px;height:382px;background:#fff"></div>
  <svg style="left:903px;top:78px" width="14" height="14"><path d="M2 1h6l3 3v4M2 1v12h5" fill="none" stroke="#e34850" stroke-width="1.3"/><circle cx="10.5" cy="10.5" r="3" fill="#e34850"/></svg>
  <svg style="left:903px;top:102px" width="14" height="15"><rect x="1" y="1" width="7" height="9" fill="#fff" stroke="#5258e4" stroke-width="1.3"/><rect x="6" y="2" width="7" height="7" fill="#5258e4"/><path d="M7 10v4M5 12l2 2 2-2" stroke="#5258e4" fill="none" stroke-width="1.2"/></svg>
  <svg style="left:903px;top:128px" width="14" height="14"><rect x="1" y="1" width="12" height="5" fill="none" stroke="#d83790" stroke-width="1.3"/><rect x="1" y="8" width="6" height="5" fill="none" stroke="#d83790" stroke-width="1.3"/><path d="M9 9h4M9 12h4" stroke="#d83790" stroke-width="1.3"/></svg>
  <svg style="left:904px;top:153px" width="12" height="14"><path d="M1 1h7l3 3v9H1z" fill="none" stroke="#b33ec8" stroke-width="1.3"/><rect x="3" y="7" width="6" height="4" fill="none" stroke="#b33ec8"/></svg>
  <svg style="left:903px;top:178px" width="15" height="14"><path d="M2 11l2-3 5-6 2 2-5 6zM1 13h13M9 12c1-1 2 0 3-1" fill="none" stroke="#7e4cd8" stroke-width="1.3"/></svg>
  <svg style="left:903px;top:203px" width="15" height="14"><path d="M2 1h6l3 3v4M2 1v12h5" fill="none" stroke="#12968a" stroke-width="1.3"/><circle cx="11" cy="11" r="3" fill="#12968a"/></svg>
  <svg style="left:903px;top:228px" width="14" height="14"><rect x="1" y="1" width="12" height="12" fill="none" stroke="#44b556" stroke-width="1.3"/><path d="M7 1v12M2 6l3-2v4" fill="none" stroke="#44b556" stroke-width="1.2"/></svg>
  <svg style="left:903px;top:252px" width="15" height="15"><path d="M2 1h6l3 3v3M2 1v12h5" fill="none" stroke="#e3c100" stroke-width="1.3"/><rect x="8" y="9" width="6" height="5" fill="none" stroke="#e3c100" stroke-width="1.3"/></svg>
  <svg style="left:903px;top:278px" width="14" height="14"><path d="M1 1h12v9H8l-3 3v-3H1z" fill="#d8b200"/><path d="M3.5 4h7M3.5 6.5h7" stroke="#fff"/></svg>
  <svg style="left:903px;top:302px" width="14" height="15"><path d="M3 4V1h8v3M1 5h12v6H1zM3 9h8v5H3z" fill="none" stroke="#2d9d4e" stroke-width="1.3"/></svg>
  <svg style="left:904px;top:327px" width="12" height="14"><path d="M6 1l5 2v4c0 3-2 5-5 6-3-1-5-3-5-6V3z" fill="none" stroke="#4b4fd4" stroke-width="1.3"/></svg>
  <div class="a" style="left:897px;top:347px;width:26px;height:25px;background:#b63fd0"></div>
  <svg style="left:904px;top:353px" width="12" height="14"><path d="M1 1h7l3 3v9H1z" fill="none" stroke="#fff" stroke-width="1.3"/><path d="M3 7h6M3 10h6" stroke="#fff"/></svg>
  <svg style="left:903px;top:377px" width="15" height="15"><path d="M2 12l6-6M6 2a3 3 0 0 0 3 4" fill="none" stroke="#555" stroke-width="1.6"/><circle cx="11" cy="11" r="3" fill="none" stroke="#555" stroke-width="1.2"/><path d="M9.5 11h3M11 9.5v3" stroke="#555"/></svg>
</div>
</body></html>
